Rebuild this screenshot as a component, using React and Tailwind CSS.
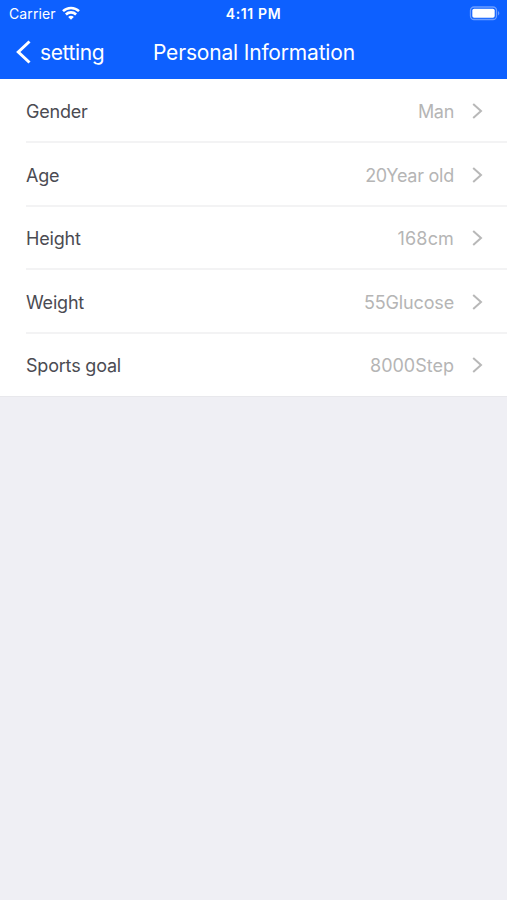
import React from 'react';

const rows = [
  { label: 'Gender', value: 'Man', height: 'h-[64px]', tracking: 'tracking-[-0.3px]' },
  { label: 'Age', value: '20Year old', height: 'h-[64px]', tracking: 'tracking-[-0.25px]' },
  { label: 'Height', value: '168cm', height: 'h-[63px]', tracking: 'tracking-[0.15px]' },
  { label: 'Weight', value: '55Glucose', height: 'h-[64px]', tracking: 'tracking-[-0.15px]' },
  { label: 'Sports goal', value: '8000Step', height: 'h-[62px]', tracking: 'tracking-normal' },
];

function StatusBar() {
  return (
    <div className="flex h-[27px] items-center justify-between pl-[7px] pr-[7px] leading-none">
      <div className="flex w-[180px] items-center gap-[6px] pl-[2px]">
        <span className="text-[14px] tracking-[0.1px]">Carrier</span>
        <svg className="-mt-px" width="18" height="14" viewBox="0 0 18 14" fill="none" stroke="currentColor" strokeWidth="2.6">
          <path d="M1 5.1C5.4.9 12.6.9 17 5.1" />
          <path d="M3.9 8.5c2.9-2.8 7.3-2.8 10.2 0" />
          <path d="M6.2 10.9c1.6-1.4 4-1.4 5.6 0L9 13.8z" fill="currentColor" stroke="none" />
        </svg>
      </div>
      <span className="whitespace-nowrap pt-px text-[14px] font-semibold tracking-[0.6px]">4:11 PM</span>
      <div className="flex w-[180px] justify-end">
        <svg width="31" height="15" viewBox="0 0 31 15">
          <rect x="1.5" y="1" width="26" height="12.5" rx="3.5" fill="none" stroke="#6c9dff" strokeWidth="1.3" />
          <rect x="3.3" y="2.8" width="22.4" height="9" rx="1.8" fill="#fff" />
          <path d="M29 5.1v4.4c1.8-.8 1.8-3.6 0-4.4z" fill="#6c9dff" />
        </svg>
      </div>
    </div>
  );
}

function NavBar() {
  return (
    <div className="flex h-[50px] items-center pl-4 text-[21px] leading-none">
      <svg width="15" height="24" viewBox="0 0 15 24" fill="none" stroke="currentColor" strokeWidth="3">
        <path d="M13.5 1.5 2.3 12l11.2 10.5" />
      </svg>
      <span className="ml-[9px] w-[113px] tracking-[-0.4px]">setting</span>
      <h1 className="whitespace-nowrap tracking-[-0.18px]">Personal Information</h1>
    </div>
  );
}

function Row({ label, value, height, tracking, last }) {
  return (
    <div
      className={`ml-[26px] flex items-center pr-[24px] text-[18px] ${height} ${
        last ? '' : 'border-b-2 border-[#f3f3f4] pt-px'
      }`}
    >
      <span className="pt-px tracking-[-0.2px] text-[#4b4b52]">{label}</span>
      <span className={`ml-auto pt-px text-[#b5b5b5] ${tracking}`}>{value}</span>
      <svg className="ml-[18px]" width="11" height="16" viewBox="0 0 11 16" fill="none" stroke="#b8b8b8" strokeWidth="2">
        <path d="M1.2 1 9 8l-7.8 7" />
      </svg>
    </div>
  );
}

export default function App() {
  return (
    <div className="min-h-screen bg-[#efeff4] font-['Inter',sans-serif]">
      <header className="h-[79px] bg-[#0d60ff] text-white">
        <StatusBar />
        <NavBar />
      </header>
      <main className="border-b border-[#e8e8ec] bg-white">
        {rows.map((row, i) => (
          <Row key={row.label} {...row} last={i === rows.length - 1} />
        ))}
      </main>
    </div>
  );
}
